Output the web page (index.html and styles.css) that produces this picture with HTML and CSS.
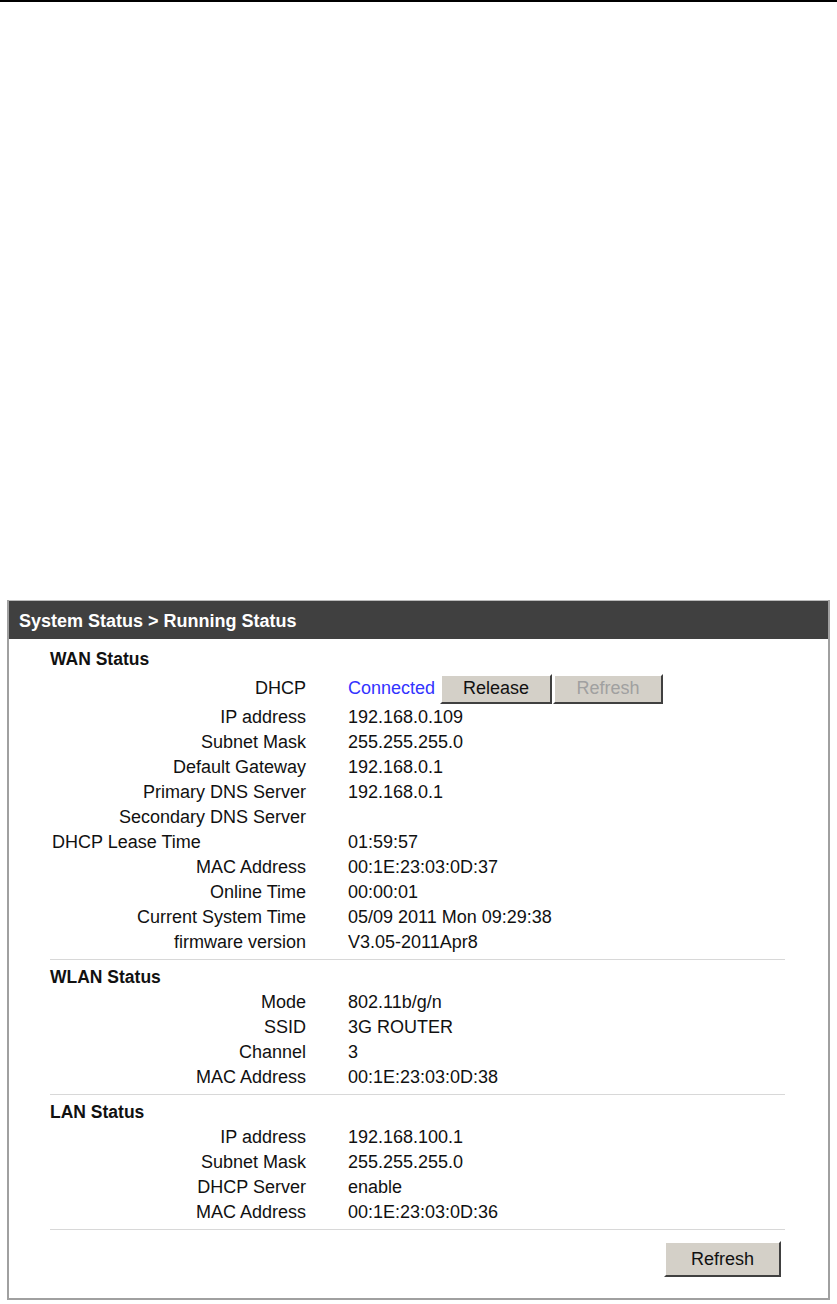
FILE: index.html
```html
<!DOCTYPE html>
<html lang="en">
<head>
    <meta charset="UTF-8">
    <title>Running Status</title>
    <link rel="stylesheet" href="styles.css">
</head>
<body>
    <div class="topline"></div>

    <div class="panel">
        <div class="panel-header">System Status &gt; Running Status</div>
        <div class="panel-body">
            <div class="section">
                <div class="section-title">WAN Status</div>
                <div class="row row-dhcp">
                    <div class="label">DHCP</div>
                    <div class="value">
                        <span class="connected">Connected</span>
                        <button class="btn">Release</button><button class="btn" disabled>Refresh</button>
                    </div>
                </div>
                <div class="row"><div class="label">IP address</div><div class="value">192.168.0.109</div></div>
                <div class="row"><div class="label">Subnet Mask</div><div class="value">255.255.255.0</div></div>
                <div class="row"><div class="label">Default Gateway</div><div class="value">192.168.0.1</div></div>
                <div class="row"><div class="label">Primary DNS Server</div><div class="value">192.168.0.1</div></div>
                <div class="row"><div class="label">Secondary DNS Server</div><div class="value"></div></div>
                <div class="row"><div class="label label-left">DHCP Lease Time</div><div class="value">01:59:57</div></div>
                <div class="row"><div class="label">MAC Address</div><div class="value">00:1E:23:03:0D:37</div></div>
                <div class="row"><div class="label">Online Time</div><div class="value">00:00:01</div></div>
                <div class="row"><div class="label">Current System Time</div><div class="value">05/09 2011 Mon 09:29:38</div></div>
                <div class="row"><div class="label">firmware version</div><div class="value">V3.05-2011Apr8</div></div>
            </div>

            <div class="section">
                <div class="section-title">WLAN Status</div>
                <div class="row"><div class="label">Mode</div><div class="value">802.11b/g/n</div></div>
                <div class="row"><div class="label">SSID</div><div class="value">3G ROUTER</div></div>
                <div class="row"><div class="label">Channel</div><div class="value">3</div></div>
                <div class="row"><div class="label">MAC Address</div><div class="value">00:1E:23:03:0D:38</div></div>
            </div>

            <div class="section">
                <div class="section-title">LAN Status</div>
                <div class="row"><div class="label">IP address</div><div class="value">192.168.100.1</div></div>
                <div class="row"><div class="label">Subnet Mask</div><div class="value">255.255.255.0</div></div>
                <div class="row"><div class="label">DHCP Server</div><div class="value">enable</div></div>
                <div class="row"><div class="label">MAC Address</div><div class="value">00:1E:23:03:0D:36</div></div>
            </div>

            <div class="actions">
                <button class="btn btn-big">Refresh</button>
            </div>
        </div>
    </div>
</body>
</html>
```

FILE: styles.css
```css
body {
    margin: 0;
    padding: 0;
    background: #fff;
    font-family: 'Liberation Sans', Arial, sans-serif;
    color: #111;
}

.topline {
    height: 2px;
    background: #000;
}

.panel {
    margin: 598px 0 0 7px;
    width: 819px;
    border: 2px solid #a0a0a0;
    border-top: none;
}

.panel-header {
    background: #404040;
    color: #fff;
    font-weight: bold;
    font-size: 18px;
    height: 38px;
    line-height: 41px;
    padding-left: 10px;
    border-top: 1px solid #bbb;
}

.panel-body {
    padding: 8px 43px 21px 41px;
}

.section {
    border-bottom: 1px solid #d8d8d8;
    padding-bottom: 4px;
    margin-bottom: 5px;
}

.section-title {
    font-weight: bold;
    font-size: 17.5px;
    line-height: 25px;
}

.row {
    display: flex;
    font-size: 18px;
    line-height: 25px;
    height: 25px;
}

.row-dhcp {
    height: 33px;
    align-items: center;
}

.label {
    width: 256px;
    text-align: right;
    white-space: nowrap;
}

.label-left {
    text-align: left;
    padding-left: 2px;
    width: 254px;
}

.value {
    padding-left: 42px;
    display: flex;
    align-items: center;
    white-space: nowrap;
}

.connected {
    color: #3333ff;
    margin-right: 5px;
}

.btn {
    font-family: 'Liberation Sans', Arial, sans-serif;
    font-size: 18px;
    color: #111;
    background: #d4d0c8;
    border: 2px solid;
    border-color: #fff #404040 #404040 #fff;
    width: 112px;
    height: 30px;
    padding: 0;
    margin: 0 1px 0 0;
}

.btn:disabled {
    color: #a0a0a0;
    width: 110px;
}

.actions {
    display: flex;
    justify-content: flex-end;
    padding-top: 6px;
}

.btn-big {
    width: 117px;
    height: 36px;
    margin-right: 4px;
}
```
